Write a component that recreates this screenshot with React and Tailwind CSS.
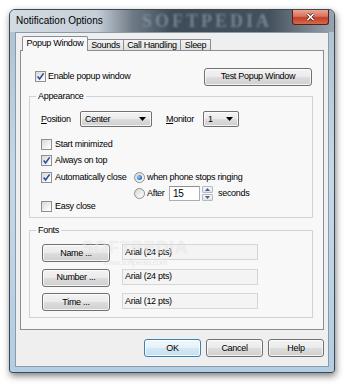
import React from 'react';

const btnBg = 'bg-[linear-gradient(180deg,#f3f3f3_0%,#ebebeb_48%,#dddddd_52%,#cfcfcf_100%)]';

const CheckBox = ({ checked }) => (
    <span className="w-[11px] h-[11px] shrink-0 border border-[#8e8f8f] bg-[linear-gradient(135deg,#d8d8d8_0%,#f6f6f6_70%,#ffffff_100%)] flex items-center justify-center">
        {checked && (
            <svg width="9" height="9" viewBox="0 0 9 9">
                <path d="M1.6 4.6 L3.6 7 L7.6 1.4" stroke="#2b4c9c" strokeWidth="1.6" fill="none" />
            </svg>
        )}
    </span>
);

const Radio = ({ checked }) => (
    <span className="w-[11px] h-[11px] shrink-0 rounded-full border border-[#8e8f8f] bg-[linear-gradient(135deg,#d4d4d4_0%,#f4f4f4_70%,#ffffff_100%)] flex items-center justify-center">
        {checked && (
            <span className="w-[5px] h-[5px] rounded-full bg-[radial-gradient(circle_at_35%_35%,#8fd0ff_0%,#2a7fd0_60%,#15508f_100%)]" />
        )}
    </span>
);

const Button = ({ children, className = '' }) => (
    <div className={`h-[18px] border border-[#707070] rounded-[3px] ${btnBg} shadow-[inset_0_0_0_1px_rgba(255,255,255,0.75)] flex items-center justify-center ${className}`}>
        {children}
    </div>
);

const Combo = ({ value, width }) => (
    <div className={`${width} h-[16px] border border-[#707070] rounded-[2px] ${btnBg} shadow-[inset_0_0_0_1px_rgba(255,255,255,0.75)] flex items-center justify-between pl-[4px] pr-[5px]`}>
        <span>{value}</span>
        <svg width="7" height="4" viewBox="0 0 7 4">
            <path d="M0 0h7L3.5 4z" fill="#000" />
        </svg>
    </div>
);

const Field = ({ text }) => (
    <div className="w-[136px] h-[16px] border border-[#d6d6d6] bg-[#f4f4f4] flex items-center pl-[2px]">
        {text}
    </div>
);

export default function App() {
    const fontRows = [
        { label: 'Name ...', value: 'Arial (24 pts)' },
        { label: 'Number ...', value: 'Arial (24 pts)' },
        { label: 'Time ...', value: 'Arial (12 pts)' },
    ];

    return (
        <div className="w-[350px] h-[388px] bg-white overflow-hidden font-['Liberation_Sans',Arial,sans-serif] text-[9px] tracking-[-0.3px] leading-none text-black">
            <div className="relative ml-[9px] mt-[9px] w-[326px] h-[364px] flex flex-col border border-[#3d4852] rounded-t-[6px] rounded-b-[3px] bg-[linear-gradient(180deg,#aebfcd_0%,#c6d8e8_45%,#b3cde3_100%)] shadow-[1px_3px_7px_rgba(0,0,0,0.5)]">
                {/* title bar */}
                <div className="relative h-[22px] shrink-0 flex items-center pl-[6px] rounded-t-[5px] overflow-hidden bg-[linear-gradient(90deg,#d3dbe3_0%,#c5ced7_27%,#6d7985_38%,#3f4b57_50%,#44505c_80%,#66727e_88%,#98a4b0_100%)]">
                    <span className="absolute left-[132px] top-0 text-[18px] leading-[22px] font-bold font-['Liberation_Serif',serif] tracking-[3px] text-[#93a8ba] opacity-60 blur-[1px]">
                        SOFTPEDIA
                    </span>
                    <span className="relative text-[10px] tracking-normal text-black">Notification Options</span>
                    <div className="absolute right-[5px] top-0 w-[37px] h-[15px] border border-t-0 border-[#5a2018] rounded-b-[3px] bg-[linear-gradient(180deg,#eaa393_0%,#d9735c_45%,#c2402a_55%,#d46a4c_100%)] flex items-center justify-center">
                        <svg width="9" height="8" viewBox="0 0 9 8">
                            <path d="M1.5 1 L7.5 7 M7.5 1 L1.5 7" stroke="#4a1a12" strokeWidth="3" />
                            <path d="M1.5 1 L7.5 7 M7.5 1 L1.5 7" stroke="#ffffff" strokeWidth="1.7" />
                        </svg>
                    </div>
                </div>

                {/* client area */}
                <div className="mx-[5px] h-[335px] shrink-0 border border-[#8b9aa7] bg-[#efefef] flex flex-col px-[4px] pt-[3px]">
                    {/* tabs */}
                    <div className="h-[14px] flex items-end pl-[2px]">
                        <div className="relative z-10 w-[66px] h-[15px] -mb-[1px] border border-b-0 border-[#898c95] rounded-t-[2px] bg-[#f8f8f8] flex items-center justify-center pb-[1px]">
                            Popup Window
                        </div>
                        <div className="-ml-[1px] w-[37px] h-[11px] border border-b-0 border-[#898c95] bg-[linear-gradient(180deg,#f3f3f3,#e1e1e1)] flex items-center justify-center">
                            Sounds
                        </div>
                        <div className="-ml-[1px] w-[58px] h-[11px] border border-b-0 border-[#898c95] bg-[linear-gradient(180deg,#f3f3f3,#e1e1e1)] flex items-center justify-center">
                            Call Handling
                        </div>
                        <div className="-ml-[1px] w-[31px] h-[11px] border border-b-0 border-[#898c95] bg-[linear-gradient(180deg,#f3f3f3,#e1e1e1)] flex items-center justify-center">
                            Sleep
                        </div>
                    </div>

                    {/* tab panel */}
                    <div className="h-[280px] border border-[#898c95] bg-[#f8f8f8] pl-[8px] pr-[10px] pt-[17px]">
                        <div className="h-[17px] flex items-center justify-between pl-[6px]">
                            <div className="flex items-center gap-[2px]">
                                <CheckBox checked />
                                <span>Enable popup window</span>
                            </div>
                            <Button className="w-[108px] mr-[1px]">Test Popup Window</Button>
                        </div>

                        <fieldset className="mt-[5px] border border-[#cdd3d8] pl-[11px] pb-[3px]">
                            <legend className="ml-[-5px] px-[2px] leading-[12px]">Appearance</legend>
                            <div className="mt-[9px] h-[16px] flex items-center">
                                <span className="w-[39px]"><u>P</u>osition</span>
                                <Combo value="Center" width="w-[72px]" />
                                <span className="ml-[14px] w-[37px]"><u>M</u>onitor</span>
                                <Combo value="1" width="w-[36px]" />
                            </div>
                            <div className="mt-[9px] h-[16px] flex items-center gap-[3px]">
                                <CheckBox />
                                <span>Start minimized</span>
                            </div>
                            <div className="h-[16px] flex items-center gap-[3px]">
                                <CheckBox checked />
                                <span>Always on top</span>
                            </div>
                            <div className="mt-[1px] flex">
                                <div className="w-[93px]">
                                    <div className="h-[16px] flex items-center gap-[3px]">
                                        <CheckBox checked />
                                        <span>Automatically close</span>
                                    </div>
                                    <div className="mt-[13px] h-[16px] flex items-center gap-[3px]">
                                        <CheckBox />
                                        <span>Easy close</span>
                                    </div>
                                </div>
                                <div>
                                    <div className="h-[16px] flex items-center gap-[2px]">
                                        <Radio checked />
                                        <span>when phone stops ringing</span>
                                    </div>
                                    <div className="mt-[1px] h-[15px] flex items-center">
                                        <Radio />
                                        <span className="ml-[2px] w-[22px]">After</span>
                                        <div className="w-[31px] h-[15px] border border-[#abadb3] border-t-[#8c8f94] bg-white flex items-center pl-[3px] text-[10px]">
                                            15
                                        </div>
                                        <div className="ml-[2px] w-[11px] h-[15px] flex flex-col gap-[1px]">
                                            <div className="flex-1 border border-[#b5b8bd] rounded-[1px] bg-[linear-gradient(180deg,#f6f8fa,#dde4ec)] flex items-center justify-center">
                                                <svg width="5" height="3" viewBox="0 0 5 3"><path d="M0 3h5L2.5 0z" fill="#4d6185" /></svg>
                                            </div>
                                            <div className="flex-1 border border-[#b5b8bd] rounded-[1px] bg-[linear-gradient(180deg,#f6f8fa,#dde4ec)] flex items-center justify-center">
                                                <svg width="5" height="3" viewBox="0 0 5 3"><path d="M0 0h5L2.5 3z" fill="#4d6185" /></svg>
                                            </div>
                                        </div>
                                        <span className="ml-[5px]">seconds</span>
                                    </div>
                                </div>
                            </div>
                        </fieldset>

                        <fieldset className="mt-[6px] border border-[#cdd3d8] pl-[12px] pb-[6px]">
                            <legend className="ml-[-6px] px-[2px] leading-[12px]">Fonts</legend>
                            <div className="mt-[8px] flex flex-col gap-[6.5px]">
                                {fontRows.map((row) => (
                                    <div key={row.label} className="flex items-start gap-[12px]">
                                        <Button className="w-[68px]">{row.label}</Button>
                                        <Field text={row.value} />
                                    </div>
                                ))}
                            </div>
                        </fieldset>
                    </div>

                    {/* dialog buttons */}
                    <div className="mt-[9px] flex justify-end gap-[5px]">
                        <div className="w-[57px] h-[18px] border border-[#3c7fb1] rounded-[3px] bg-[linear-gradient(180deg,#f2f8fc_0%,#e5f1f9_48%,#d5e8f5_52%,#c6dff0_100%)] shadow-[inset_0_0_0_1px_rgba(255,255,255,0.8)] flex items-center justify-center">
                            OK
                        </div>
                        <Button className="w-[57px]">Cancel</Button>
                        <Button className="w-[56px]">Help</Button>
                    </div>
                </div>

                {/* softpedia watermark over the fonts area */}
                <div className="absolute left-[72px] top-[229px] flex flex-col items-center opacity-50 pointer-events-none">
                    <span className="text-[17px] font-bold tracking-[1px] text-[#e8e8e8] [text-shadow:0_0_1px_#b8b8b8]">SOFTPEDIA</span>
                    <span className="mt-[3px] text-[8px] text-[#d0d0d0]">www.softpedia.com</span>
                </div>
            </div>
        </div>
    );
}
